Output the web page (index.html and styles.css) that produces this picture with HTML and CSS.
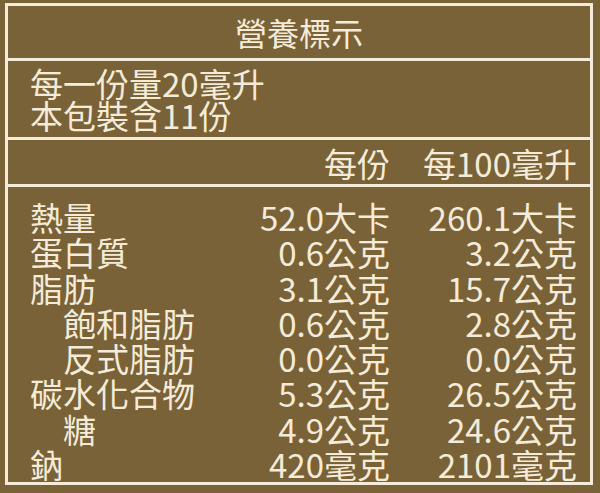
FILE: index.html
```html
<!DOCTYPE html>
<html lang="zh-Hant">
<head>
<meta charset="utf-8">
<title>營養標示</title>
<link rel="stylesheet" href="styles.css">
</head>
<body>
<div class="label">
  <div class="title">營養標示</div>
  <div class="serving">
    <div>每一份量20毫升</div>
    <div>本包裝含11份</div>
  </div>
  <div class="grid head">
    <div></div>
    <div class="num">每份</div>
    <div class="num">每100毫升</div>
  </div>
  <div class="grid body">
    <div>熱量</div><div class="num">52.0大卡</div><div class="num">260.1大卡</div>
    <div>蛋白質</div><div class="num">0.6公克</div><div class="num">3.2公克</div>
    <div>脂肪</div><div class="num">3.1公克</div><div class="num">15.7公克</div>
    <div class="sub">飽和脂肪</div><div class="num">0.6公克</div><div class="num">2.8公克</div>
    <div class="sub">反式脂肪</div><div class="num">0.0公克</div><div class="num">0.0公克</div>
    <div>碳水化合物</div><div class="num">5.3公克</div><div class="num">26.5公克</div>
    <div class="sub">糖</div><div class="num">4.9公克</div><div class="num">24.6公克</div>
    <div>鈉</div><div class="num">420毫克</div><div class="num">2101毫克</div>
  </div>
</div>
</body>
</html>
```
FILE: styles.css
```css
html, body {
  margin: 0;
  padding: 0;
}
body {
  background: #7a6238;
  width: 600px;
  height: 493px;
  box-sizing: border-box;
  padding: 3px 7px 8px 5px;
  font-family: "Noto Sans CJK TC", "Noto Sans", sans-serif;
  color: #f4ecd8;
  font-size: 33px;
  line-height: 34px;
}
.label {
  border: 3px solid #f4ecd8;
  height: 482px;
  box-sizing: border-box;
  display: flex;
  flex-direction: column;
}
.title {
  height: 52px;
  border-bottom: 3px solid #f4ecd8;
  display: flex;
  align-items: center;
  justify-content: center;
  font-size: 32px;
}
.serving {
  height: 79px;
  border-bottom: 3px solid #f4ecd8;
  padding: 6px 0 0 22px;
  box-sizing: border-box;
  line-height: 32px;
}
.grid {
  display: grid;
  grid-template-columns: 1fr 160px 187px;
  padding: 0 13px 0 22px;
}
.head {
  height: 47px;
  border-bottom: 3px solid #f4ecd8;
  box-sizing: border-box;
  padding-top: 6px;
}
.body {
  flex: 1;
  padding-top: 13px;
}
.num {
  text-align: right;
  white-space: nowrap;
}
.sub {
  padding-left: 33px;
}
```
